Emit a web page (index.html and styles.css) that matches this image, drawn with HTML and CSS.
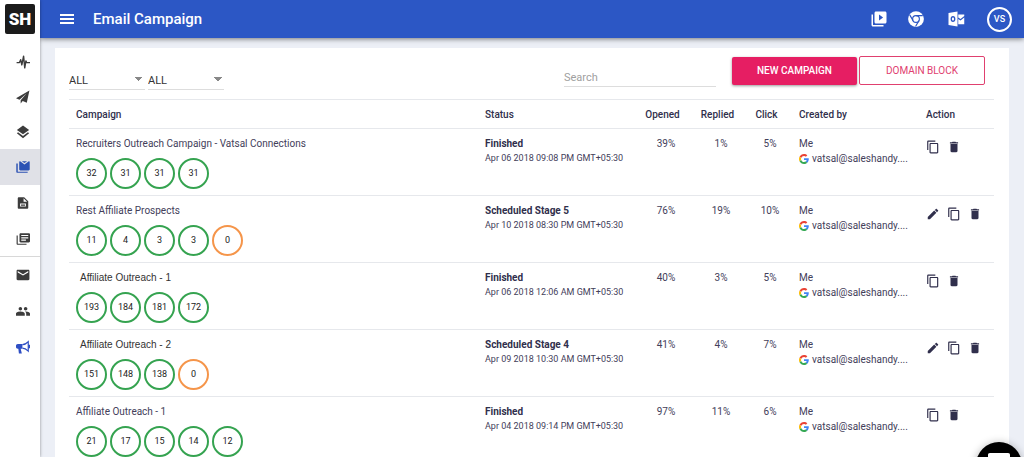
FILE: index.html
```html
<!DOCTYPE html>
<html lang="en">
<head>
    <meta charset="UTF-8">
    <meta name="viewport" content="width=device-width, initial-scale=1.0">
    <title>Email Campaign</title>
    <link rel="stylesheet" href="styles.css">
</head>
<body>

<!-- shared icons -->
<svg class="sprite" aria-hidden="true">
    <symbol id="copy" viewBox="0 0 24 24"><path d="M16 1H4c-1.1 0-2 .9-2 2v14h2V3h12V1zm3 4H8c-1.1 0-2 .9-2 2v14c0 1.1.9 2 2 2h11c1.1 0 2-.9 2-2V7c0-1.1-.9-2-2-2zm0 16H8V7h11v14z"/></symbol>
    <symbol id="trash" viewBox="0 0 24 24"><path d="M6 19c0 1.1.9 2 2 2h8c1.1 0 2-.9 2-2V7H6v12zM19 4h-3.5l-1-1h-5l-1 1H5v2h14V4z"/></symbol>
    <symbol id="edit" viewBox="0 0 24 24"><path d="M3 17.25V21h3.75L17.81 9.94l-3.75-3.75L3 17.25zM20.71 7.04c.39-.39.39-1.02 0-1.41l-2.34-2.34c-.39-.39-1.02-.39-1.41 0l-1.83 1.83 3.75 3.75 1.83-1.83z"/></symbol>
    <symbol id="google" viewBox="0 0 48 48">
        <path fill="#ea4335" d="M24 9.5c3.54 0 6.71 1.22 9.21 3.6l6.85-6.85C35.9 2.38 30.47 0 24 0 14.62 0 6.51 5.38 2.56 13.22l7.98 6.19C12.43 13.72 17.74 9.5 24 9.5z"/>
        <path fill="#4285f4" d="M46.98 24.55c0-1.57-.15-3.09-.38-4.55H24v9.02h12.94c-.58 2.96-2.26 5.48-4.78 7.18l7.73 6c4.51-4.18 7.09-10.36 7.09-17.65z"/>
        <path fill="#fbbc05" d="M10.53 28.59c-.48-1.45-.76-2.99-.76-4.59s.27-3.14.76-4.59l-7.98-6.19C.92 16.46 0 20.12 0 24s.92 7.54 2.56 10.78l7.97-6.19z"/>
        <path fill="#34a853" d="M24 48c6.48 0 11.93-2.13 15.89-5.81l-7.73-6c-2.15 1.45-4.92 2.3-8.16 2.3-6.26 0-11.57-4.22-13.47-9.91l-7.98 6.19C6.51 42.62 14.62 48 24 48z"/>
    </symbol>
</svg>

<div class="app">
    <nav class="sidebar">
        <a class="logo" href="#">SH</a>
        <div class="nav-group">
            <a class="nav-item" href="#" aria-label="Activity">
                <svg viewBox="0 0 24 24"><path fill="none" stroke="currentColor" stroke-width="2.4" stroke-linejoin="round" d="M1 13h5l2-5 2 9 3-15 2 20 2-12 1 3h6"/></svg>
            </a>
            <a class="nav-item" href="#" aria-label="Outreach">
                <svg viewBox="0 0 24 24"><path d="M23 1 0 14l6 2.500L18 6 8 17.500V23l3.500-4 7 3z"/></svg>
            </a>
            <a class="nav-item" href="#" aria-label="Layers">
                <svg viewBox="0 0 24 24"><path d="M12 19l-8.500-6.500L1.500 14 12 22.500 22.500 14l-2-1.500L12 19zM12 16l10.500-7.500L12 1 1.500 8.500 12 16z"/></svg>
            </a>
        </div>
        <div class="nav-group tall">
            <a class="nav-item active" href="#" aria-label="Email campaign">
                <svg viewBox="0 0 24 24"><path d="M7 2 14.500 7.500 22 2c1.100 0 1.500.9 1.500 2v12c0 1.100-.9 2-2 2h-14c-1.100 0-2-.9-2-2V4c0-1.100.4-2 1.500-2zM10 2h9l-4.500 3.300zM3 6H.500v14c0 1.100.9 2 2 2H20v-2H3V6z"/></svg>
            </a>
            <a class="nav-item" href="#" aria-label="Templates">
                <svg viewBox="0 0 24 24"><path d="M14 2H5c-1.100 0-2 .9-2 2v16c0 1.100.9 2 2 2h14c1.100 0 2-.9 2-2V9l-7-7zm3 16H7v-5h10v5zm-4-8V4l6 6h-6zM8.500 14h7v1h-7zM8.500 16h7v1h-7z"/></svg>
            </a>
            <a class="nav-item last" href="#" aria-label="Documents">
                <svg viewBox="0 0 24 24"><path d="M3 6H1v14c0 1.100.9 2 2 2h15v-2H3V6zm19-4H8c-1.100 0-2 .9-2 2v12c0 1.100.9 2 2 2h14c1.100 0 2-.9 2-2V4c0-1.100-.9-2-2-2zm-1 9H9V9h12v2zm-4 4H9v-2h8v2zm4-8H9V5h12v2z"/></svg>
            </a>
            <a class="nav-item" href="#" aria-label="Mail">
                <svg viewBox="0 0 24 24"><path d="M21 3H3c-1.100 0-2 .9-2 2v14c0 1.100.9 2 2 2h18c1.100 0 2-.9 2-2V5c0-1.100-.9-2-2-2zm0 4.500-9 5.500-9-5.500V5l9 5.500L21 5v2.500z"/></svg>
            </a>
            <a class="nav-item" href="#" aria-label="Contacts">
                <svg viewBox="0 0 24 24"><path d="M16.500 11c1.660 0 3-1.340 3-3s-1.340-3-3-3-3 1.340-3 3 1.340 3 3 3zm-9 0c1.660 0 3-1.340 3-3s-1.340-3-3-3-3 1.340-3 3 1.340 3 3 3zm0 2C5.200 13 0 14.200 0 16.500V20h15v-3.500C15 14.200 9.800 13 7.500 13zm9 0c-.3 0-.6 0-1 .05 1.200.9 2 2 2 3.450V20H24v-3.500c0-2.300-5.200-3.500-7.500-3.500z"/></svg>
            </a>
            <a class="nav-item promo" href="#" aria-label="Announcements">
                <svg viewBox="0 0 24 24"><path d="M11 7H3c-1.700 0-3 1.300-3 3v2c0 1.700 1.300 3 3 3h1l1 8h5l-2-8h3z"/><path fill="none" stroke="currentColor" stroke-width="2" d="M11 8c4 0 7-2 10-5v16c-3-3-6-5-10-5"/><path d="M21 8h3v6h-3z"/></svg>
            </a>
        </div>
    </nav>

    <div class="page">
        <header class="topbar">
            <button class="icon-btn" type="button" aria-label="Menu">
                <svg class="menu-icon" viewBox="0 0 14 10"><path d="M0 0h14v2H0zM0 4h14v2H0zM0 8h14v2H0z"/></svg>
            </button>
            <h1>Email Campaign</h1>
            <div class="top-links">
                <a href="#" aria-label="Videos">
                    <svg viewBox="0 0 24 24"><path d="M4 6H2v14c0 1.100.9 2 2 2h14v-2H4V6zm16-4H8c-1.100 0-2 .9-2 2v12c0 1.100.9 2 2 2h12c1.100 0 2-.9 2-2V4c0-1.100-.9-2-2-2zm-8 12V6l5.500 4-5.500 4z"/></svg>
                </a>
                <a href="#" aria-label="Chrome extension">
                    <svg viewBox="0 0 24 24"><circle cx="12" cy="12" r="10.500"/><g fill="none" stroke="#2c57c5" stroke-width="1.500"><circle cx="12" cy="12" r="4.500"/><path d="M12 7.500h9M8.100 14.200 3.600 6.500M15.900 14.200 11.400 22"/></g></svg>
                </a>
                <a class="outlook" href="#" aria-label="Outlook add-in">
                    <svg viewBox="0 0 24 24"><path d="M14 2v20L2 20V4zM8 8c-2 0-3.200 1.700-3.200 4S6 16 8 16s3.200-1.700 3.200-4S10 8 8 8zm0 2c1 0 1.400.9 1.400 2S9 14 8 14s-1.400-.9-1.400-2S7 10 8 10z"/><path d="M15 6h8v2l-5 4-3-2zM15 12l3 2 5-4v9h-8z"/></svg>
                </a>
                <a class="avatar" href="#">VS</a>
            </div>
        </header>

        <main class="card">
            <div class="toolbar">
                <div class="filters">
                    <select aria-label="Campaign status"><option>ALL</option></select>
                    <select aria-label="Campaign owner"><option>ALL</option></select>
                </div>
                <input class="search" type="text" placeholder="Search" aria-label="Search">
                <div class="buttons">
                    <button class="btn btn-primary" type="button">NEW CAMPAIGN</button>
                    <button class="btn btn-outline" type="button">DOMAIN BLOCK</button>
                </div>
            </div>

            <table class="campaigns">
                <thead>
                    <tr>
                        <th class="col-name">Campaign</th>
                        <th class="col-status">Status</th>
                        <th class="col-opened num">Opened</th>
                        <th class="col-replied num">Replied</th>
                        <th class="col-click num">Click</th>
                        <th class="col-owner">Created by</th>
                        <th class="col-action">Action</th>
                    </tr>
                </thead>
                <tbody>
                    <tr>
                        <td>
                            <div class="name">Recruiters Outreach Campaign - Vatsal Connections</div>
                            <div class="stages"><span>32</span><span>31</span><span>31</span><span>31</span></div>
                        </td>
                        <td><strong>Finished</strong><div class="date">Apr 06 2018 09:08 PM GMT+05:30</div></td>
                        <td class="num">39%</td>
                        <td class="num">1%</td>
                        <td class="num">5%</td>
                        <td>Me<div class="owner"><svg><use href="#google"/></svg>vatsal@saleshandy....</div></td>
                        <td>
                            <div class="actions">
                                <button type="button" aria-label="Copy"><svg><use href="#copy"/></svg></button>
                                <button type="button" aria-label="Delete"><svg><use href="#trash"/></svg></button>
                            </div>
                        </td>
                    </tr>
                    <tr>
                        <td>
                            <div class="name">Rest Affiliate Prospects</div>
                            <div class="stages"><span>11</span><span>4</span><span>3</span><span>3</span><span class="pending">0</span></div>
                        </td>
                        <td><strong>Scheduled Stage 5</strong><div class="date">Apr 10 2018 08:30 PM GMT+05:30</div></td>
                        <td class="num">76%</td>
                        <td class="num">19%</td>
                        <td class="num">10%</td>
                        <td>Me<div class="owner"><svg><use href="#google"/></svg>vatsal@saleshandy....</div></td>
                        <td>
                            <div class="actions">
                                <button type="button" aria-label="Edit"><svg><use href="#edit"/></svg></button>
                                <button type="button" aria-label="Copy"><svg><use href="#copy"/></svg></button>
                                <button type="button" aria-label="Delete"><svg><use href="#trash"/></svg></button>
                            </div>
                        </td>
                    </tr>
                    <tr>
                        <td>
                            <div class="name renamed">Affiliate Outreach - 1</div>
                            <div class="stages"><span>193</span><span>184</span><span>181</span><span>172</span></div>
                        </td>
                        <td><strong>Finished</strong><div class="date">Apr 06 2018 12:06 AM GMT+05:30</div></td>
                        <td class="num">40%</td>
                        <td class="num">3%</td>
                        <td class="num">5%</td>
                        <td>Me<div class="owner"><svg><use href="#google"/></svg>vatsal@saleshandy....</div></td>
                        <td>
                            <div class="actions">
                                <button type="button" aria-label="Copy"><svg><use href="#copy"/></svg></button>
                                <button type="button" aria-label="Delete"><svg><use href="#trash"/></svg></button>
                            </div>
                        </td>
                    </tr>
                    <tr>
                        <td>
                            <div class="name renamed">Affiliate Outreach - 2</div>
                            <div class="stages"><span>151</span><span>148</span><span>138</span><span class="pending">0</span></div>
                        </td>
                        <td><strong>Scheduled Stage 4</strong><div class="date">Apr 09 2018 10:30 AM GMT+05:30</div></td>
                        <td class="num">41%</td>
                        <td class="num">4%</td>
                        <td class="num">7%</td>
                        <td>Me<div class="owner"><svg><use href="#google"/></svg>vatsal@saleshandy....</div></td>
                        <td>
                            <div class="actions">
                                <button type="button" aria-label="Edit"><svg><use href="#edit"/></svg></button>
                                <button type="button" aria-label="Copy"><svg><use href="#copy"/></svg></button>
                                <button type="button" aria-label="Delete"><svg><use href="#trash"/></svg></button>
                            </div>
                        </td>
                    </tr>
                    <tr>
                        <td>
                            <div class="name">Affiliate Outreach - 1</div>
                            <div class="stages"><span>21</span><span>17</span><span>15</span><span>14</span><span>12</span></div>
                        </td>
                        <td><strong>Finished</strong><div class="date">Apr 04 2018 09:14 PM GMT+05:30</div></td>
                        <td class="num">97%</td>
                        <td class="num">11%</td>
                        <td class="num">6%</td>
                        <td>Me<div class="owner"><svg><use href="#google"/></svg>vatsal@saleshandy....</div></td>
                        <td>
                            <div class="actions">
                                <button type="button" aria-label="Copy"><svg><use href="#copy"/></svg></button>
                                <button type="button" aria-label="Delete"><svg><use href="#trash"/></svg></button>
                            </div>
                        </td>
                    </tr>
                </tbody>
            </table>
        </main>
    </div>
</div>

<button class="chat" type="button" aria-label="Open chat">
    <svg viewBox="0 0 24 24"><path d="M3 0h18c1.500 0 2 .8 2 2v22l-5-4H3c-1.500 0-2-.8-2-2V2C1 .8 1.500 0 3 0z"/></svg>
</button>

</body>
</html>
```
FILE: styles.css
```css
* {
    box-sizing: border-box;
}

body {
    margin: 0;
    font-family: Roboto, Arial, sans-serif;
    font-size: 10px;
    line-height: 15px;
    color: #43405a;
    background-color: #eceff6;
}

a {
    color: inherit;
    text-decoration: none;
}

button {
    font-family: inherit;
    border: none;
    background: none;
    padding: 0;
    cursor: pointer;
}

svg {
    display: block;
    fill: currentColor;
}

.sprite {
    display: none;
}

.app {
    display: flex;
    height: 100vh;
    overflow: hidden;
}

/* sidebar */
.sidebar {
    flex: none;
    width: 40px;
    padding-top: 4px;
    background-color: #fff;
    box-shadow: 0 0 3px rgba(0, 0, 0, 0.4);
    z-index: 2;
}

.logo {
    display: flex;
    align-items: center;
    justify-content: center;
    width: 30px;
    height: 30px;
    margin: 0 5px 10px;
    border-radius: 2px;
    background-color: #1b1b1b;
    color: #fff;
    font-size: 17px;
    font-weight: 900;
}

.nav-item {
    display: flex;
    align-items: center;
    justify-content: center;
    height: 35px;
    padding-left: 5px;
    color: #3c3c3c;
}

.tall .nav-item {
    height: 36px;
}

.nav-item svg {
    width: 14px;
    height: 14px;
}

.nav-item.active {
    background-color: #e0e1e7;
    color: #2c52b4;
}

.nav-item.last {
    border-bottom: 1px solid #d8d8d8;
}

.nav-item.promo {
    color: #2f4fc4;
}

/* header */
.page {
    flex: 1;
    min-width: 0;
}

.topbar {
    display: flex;
    align-items: center;
    height: 38px;
    padding: 0 12px 0 20px;
    background-color: #2c57c5;
    box-shadow: 0 1px 5px rgba(0, 0, 0, 0.5);
    color: #fff;
}

.icon-btn {
    color: inherit;
}

.menu-icon {
    width: 14px;
    height: 10px;
}

.topbar h1 {
    margin: 0 0 0 19px;
    font-size: 15px;
    font-weight: 500;
}

.top-links {
    display: flex;
    align-items: center;
    gap: 19px;
    margin-left: auto;
}

.top-links svg {
    width: 18px;
    height: 18px;
}

.outlook {
    margin-left: 3px;
}

.avatar {
    display: flex;
    align-items: center;
    justify-content: center;
    width: 25px;
    height: 25px;
    margin-left: 3px;
    border: 2px solid #fff;
    border-radius: 50%;
    font-size: 9px;
    font-weight: 500;
}

/* content */
.card {
    min-height: 100%;
    margin: 10px 15px 0;
    padding: 8px 15px 0 14px;
    background-color: #fff;
}

.toolbar {
    display: flex;
    align-items: flex-start;
    height: 43px;
    padding-right: 9px;
}

.filters {
    display: flex;
    gap: 3px;
    padding-top: 16px;
}

.filters select {
    appearance: none;
    width: 76px;
    height: 18px;
    padding: 0;
    border: none;
    border-bottom: 1px solid #ddd;
    border-radius: 0;
    background-color: transparent;
    /* arrow made of two half triangles */
    background-image: linear-gradient(to top right, transparent 50%, #888 50%), linear-gradient(to top left, transparent 50%, #888 50%);
    background-position: right 6px top 5px, right 2px top 5px;
    background-size: 4px 4px;
    background-repeat: no-repeat;
    font-family: inherit;
    font-size: 11px;
    color: #333;
}

.search {
    width: 152px;
    height: 18px;
    margin: 13px 16px 0 auto;
    padding: 0;
    border: none;
    border-bottom: 1px solid #ddd;
    background: none;
    font-family: inherit;
    font-size: 11px;
}

.search::placeholder {
    color: #a0a0a0;
}

.buttons {
    display: flex;
    align-items: center;
    gap: 2px;
}

.btn {
    border-radius: 2px;
    font-size: 10px;
}

.btn-primary {
    width: 125px;
    height: 28px;
    background-color: #e61e63;
    box-shadow: 0 1px 3px rgba(0, 0, 0, 0.4);
    color: #fff;
    font-weight: 500;
}

.btn-outline {
    width: 126px;
    height: 29px;
    border: 1px solid #e0406f;
    color: #e0406f;
}

/* table */
.campaigns {
    width: 100%;
    table-layout: fixed;
    border-collapse: collapse;
    border-top: 1px solid #e6e8ec;
}

.campaigns th {
    height: 29px;
    padding: 0 7px;
    text-align: left;
    font-weight: 500;
    color: #302f4c;
    white-space: nowrap;
}

.campaigns tr {
    border-bottom: 1px solid #e6e8ec;
}

.campaigns td {
    height: 67px;
    padding: 7px 0 0 7px;
    vertical-align: top;
    white-space: nowrap;
}

.campaigns strong {
    font-weight: 700;
    color: #302f4c;
}

.campaigns .num {
    padding-left: 0;
    text-align: center;
}

.col-status {
    width: 160px;
}

.col-opened {
    width: 56px;
}

.col-replied {
    width: 54px;
}

.col-click {
    width: 44px;
}

.col-owner {
    width: 127px;
}

.col-action {
    width: 75px;
}

.name.renamed {
    padding-left: 4px;
    font-family: "Liberation Sans", Arial, sans-serif;
    color: #333;
}

.date {
    font-size: 9px;
}

.stages {
    display: flex;
    gap: 3px;
    margin-top: 7px;
}

.stages span {
    display: flex;
    align-items: center;
    justify-content: center;
    width: 31px;
    height: 31px;
    border: 2px solid #35a350;
    border-radius: 50%;
    font-size: 9px;
    color: #222;
}

.stages .pending {
    border-color: #f5954a;
}

.owner {
    display: flex;
    align-items: center;
    gap: 3px;
}

.owner svg {
    width: 10px;
    height: 10px;
}

.actions {
    display: flex;
    gap: 7px;
    padding-top: 4px;
}

.actions button {
    color: #302f4c;
}

.actions svg {
    width: 14px;
    height: 14px;
}

/* floating chat button, partly below the fold */
.chat {
    position: fixed;
    right: 2px;
    bottom: -31px;
    display: flex;
    align-items: center;
    justify-content: center;
    width: 46px;
    height: 46px;
    border-radius: 50%;
    background-color: #000;
    box-shadow: 0 1px 8px rgba(0, 0, 0, 0.3);
    color: #fff;
}

.chat svg {
    width: 24px;
    height: 24px;
}
```
